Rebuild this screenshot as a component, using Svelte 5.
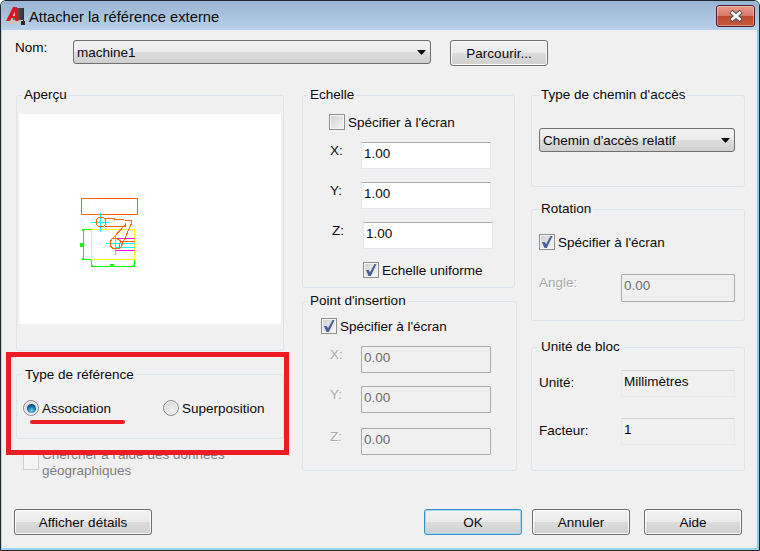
<script>
  const fieldsScale = [
    { label: 'X:', value: '1.00' },
    { label: 'Y:', value: '1.00' },
    { label: 'Z:', value: '1.00', shift: true }
  ];
  const fieldsInsert = [
    { label: 'X:', value: '0.00' },
    { label: 'Y:', value: '0.00' },
    { label: 'Z:', value: '0.00' }
  ];
</script>

{#snippet check(checked, disabled = false)}
  <span class="check" class:off={disabled}>
    {#if checked}
      <svg width="14" height="14" viewBox="0 0 14 14"><path d="M2 7 L4.8 7 L6 9.3 L10.5 1 L12.5 1 L6.8 13 L4.5 13 Z" fill="#4a5f97" /></svg>
    {/if}
  </span>
{/snippet}

{#snippet arrow()}
  <svg class="arrow" width="9" height="5" viewBox="0 0 9 5"><path d="M0 0H9L4.5 5Z" fill="#000" /></svg>
{/snippet}

<div class="window">
  <header class="titlebar">
    <svg class="appicon" width="20" height="20" viewBox="0 0 20 20">
      <defs>
        <linearGradient id="dk" x1="0" x2="1"><stop offset="0" stop-color="#6d6d6d" /><stop offset="1" stop-color="#2f2f2f" /></linearGradient>
      </defs>
      <rect x="7" y="2" width="11" height="13" fill="url(#dk)" />
      <rect x="0" y="14" width="17" height="4" fill="#c4c4c4" />
      <path d="M0 15 L7 1 H11 L12.5 15 H9.5 L9.2 12 H5.5 L4 15 Z" fill="#e0141c" />
      <path d="M6.7 10 L8.7 5.5 L9 10 Z" fill="#f0c8c8" />
      <rect x="15" y="15" width="4" height="4" fill="#2a2a2a" />
    </svg>
    <span class="title">Attacher la référence externe</span>
    <button class="close" aria-label="Fermer">
      <svg width="14" height="12" viewBox="0 0 14 12"><path d="M2 1.5 L12 10.5 M12 1.5 L2 10.5" stroke="#4a4a55" stroke-width="4.6" /><path d="M2.5 2 L11.5 10 M11.5 2 L2.5 10" stroke="#f4f4f6" stroke-width="3" /></svg>
    </button>
  </header>

  <div class="content">
    <div class="toprow">
      <span class="nom">Nom:</span>
      <div class="combo name">machine1 {@render arrow()}</div>
      <div class="btn browse">Parcourir...</div>
    </div>

    <div class="columns">
      <div class="col">
        <section class="group preview-g">
          <div class="legend high left">Aperçu</div>
          <div class="preview">
            <svg width="262" height="210" viewBox="19 114 262 210" shape-rendering="crispEdges" fill="none">
              <rect x="81.5" y="198.5" width="56" height="16" stroke="#ff6600" />
              <path d="M83.5 229.5V259.5M83 229.5H91M83 259.5H91M91.5 259V266.5H134.5V259" stroke="#00ff00" />
              <rect x="80" y="243" width="3" height="4" fill="#00ff00" />
              <rect x="110" y="264" width="4" height="3" fill="#00ff00" />
              <rect x="82" y="229" width="2" height="2" fill="#00ff00" />
              <rect x="82" y="258" width="2" height="2" fill="#00ff00" />
              <rect x="91" y="265" width="2" height="2" fill="#00ff00" />
              <rect x="133" y="265" width="2" height="2" fill="#00ff00" />
              <rect x="91.5" y="229.5" width="43" height="29.5" stroke="#ffff00" />
              <path d="M116 238.5H135M116 250.5H135" stroke="#ff00ff" />
              <path d="M106 243.5H135M116 247.5H135M115.5 235V255M91 222.5H110M100.5 213V232" stroke="#00ffff" />
              <g stroke="#ff6600">
                <path d="M96.5 219.5L98.5 217.5H103.5L105.5 219.5V224.5L103.5 226.5H98.5L96.5 224.5Z" />
                <path d="M105 218.5H114V219.5H124M105 226.5H125V222.5M125 221L127 220.5H131L131 224.5L120.5 248M125.5 224.5L113 238" />
                <path d="M112.5 238.5H116L120.5 241L119 248.5H113L110.5 246V241Z" />
                <path d="M120 241.5H135" />
              </g>
            </svg>
          </div>
        </section>

        <section class="group type-g">
          <div class="legend">Type de référence</div>
          <div class="radios">
            <label class="opt first"><span class="radio on"><i></i></span>Association</label>
            <label class="opt"><span class="radio"></span>Superposition</label>
          </div>
        </section>

        <div class="geo">
          {@render check(false, true)}
          <span>Chercher à l'aide des données<br />géographiques</span>
        </div>
      </div>

      <div class="col">
        <section class="group scale-g">
          <div class="legend high left">Echelle</div>
          <label class="chk scale-chk">{@render check(false)}Spécifier à l'écran</label>
          {#each fieldsScale as f}
            <div class="frow" class:shift={f.shift}>
              <span class="flabel">{f.label}</span>
              <div class="field">{f.value}</div>
            </div>
          {/each}
          <label class="chk uniform">{@render check(true)}Echelle uniforme</label>
        </section>

        <section class="group insert-g">
          <div class="legend high left">Point d'insertion</div>
          <label class="chk insert-chk">{@render check(true)}Spécifier à l'écran</label>
          {#each fieldsInsert as f, i}
            <div class="frow dis" class:last={i === 2}>
              <span class="flabel">{f.label}</span>
              <div class="field off">{f.value}</div>
            </div>
          {/each}
        </section>
      </div>

      <div class="col">
        <section class="group path-g">
          <div class="legend high right">Type de chemin d'accès</div>
          <div class="combo path">Chemin d'accès relatif {@render arrow()}</div>
        </section>

        <section class="group rot-g">
          <div class="legend high right">Rotation</div>
          <label class="chk rot-chk">{@render check(true)}Spécifier à l'écran</label>
          <div class="rrow dis">
            <span class="rlabel">Angle:</span>
            <div class="field off angle">0.00</div>
          </div>
        </section>

        <section class="group unit-g">
          <div class="legend high right">Unité de bloc</div>
          <div class="urow u1">
            <span class="ulabel">Unité:</span>
            <div class="field ro">Millimètres</div>
          </div>
          <div class="urow u2">
            <span class="ulabel">Facteur:</span>
            <div class="field ro">1</div>
          </div>
        </section>
      </div>
    </div>

    <footer class="footer">
      <div class="btn details">Afficher détails</div>
      <div class="actions">
        <div class="btn act default">OK</div>
        <div class="btn act cancel">Annuler</div>
        <div class="btn act help">Aide</div>
      </div>
    </footer>
  </div>

  <div class="redbox"></div>
  <div class="redline"></div>
</div>

<style>
  :global(body) {
    margin: 0;
    background: #fff;
  }
  .window {
    position: relative;
    width: 760px;
    height: 551px;
    box-sizing: border-box;
    display: flex;
    flex-direction: column;
    overflow: hidden;
    border: 1px solid #20262c;
    border-radius: 6px 6px 0 0;
    font-family: "Liberation Sans", Arial, sans-serif;
    font-size: 13.5px;
    line-height: 15px;
    color: #0a0a0a;
    background: #f0f0f0;
  }
  .titlebar {
    height: 29px;
    flex: none;
    display: flex;
    align-items: flex-start;
    background: linear-gradient(#99b4d1, #b9d1ea);
  }
  .appicon {
    margin: 5px 0 0 5px;
  }
  .title {
    margin: 8px 0 0 3px;
    font-size: 14.75px;
    line-height: 16px;
  }
  .close {
    margin: 4px 4px 0 auto;
    width: 39px;
    height: 22px;
    padding: 0;
    box-sizing: border-box;
    border: 1px solid #4c2030;
    border-radius: 3px;
    background: linear-gradient(#e79b88 0, #d97a68 48%, #bb4a2e 50%, #c3583e 100%);
    box-shadow: inset 0 0 0 1px rgba(255, 255, 255, 0.35);
    display: flex;
    align-items: center;
    justify-content: center;
  }
  .content {
    flex: 1;
    min-height: 0;
    box-sizing: border-box;
    border-left: 1px solid #a9d4ee;
    border-right: 2px solid #7fcbe8;
    border-bottom: 2px solid #9ad3ec;
    padding: 10px 12px 0 14px;
    display: flex;
    flex-direction: column;
  }
  .toprow {
    display: flex;
    align-items: flex-start;
    height: 25px;
    margin-left: -1px;
  }
  .nom {
    width: 58px;
  }
  .combo {
    position: relative;
    box-sizing: border-box;
    height: 24px;
    border: 1px solid #707070;
    border-radius: 3px;
    background: linear-gradient(#f2f2f2, #ebebeb 50%, #dcdcdc 51%, #cfcfcf);
    padding: 4px 0 0 3px;
  }
  .combo.name {
    width: 358px;
    margin-right: 19px;
  }
  .arrow {
    position: absolute;
    right: 4px;
    top: 9px;
  }
  .btn {
    box-sizing: border-box;
    height: 26px;
    border: 1px solid #707070;
    border-radius: 3px;
    background: linear-gradient(#f2f2f2, #ebebeb 50%, #dcdcdc 51%, #cfcfcf);
    box-shadow: inset 0 0 0 1px #fbfbfb;
    display: flex;
    align-items: center;
    justify-content: center;
  }
  .browse {
    width: 98px;
  }
  .columns {
    display: grid;
    grid-template-columns: 268px 233px 228px;
    margin-top: 30px;
    height: 414px;
  }
  .col {
    display: flex;
    flex-direction: column;
  }
  .col:nth-child(2) {
    margin-left: 18px;
  }
  .col:nth-child(3) {
    margin-left: 14px;
  }
  .group {
    box-sizing: border-box;
    border: 1px solid #dce3ea;
    border-radius: 3px;
    flex: none;
  }
  .legend {
    width: fit-content;
    margin: -8px 0 0 6px;
    padding: 0 2px;
    background: #f0f0f0;
  }
  .legend.high {
    margin-top: -9px;
    padding-bottom: 1px;
  }
  .legend.left {
    margin-left: 5px;
  }
  .legend.right {
    margin-left: 7px;
  }
  .preview-g {
    height: 256px;
  }
  .preview {
    margin: 11px 0 0 2px;
    width: 262px;
    height: 210px;
    background: #fff;
  }
  .preview svg {
    display: block;
  }
  .type-g {
    height: 65px;
    margin-top: 23px;
  }
  .radios {
    display: flex;
    padding: 18px 0 0 6px;
  }
  .opt {
    display: flex;
    align-items: center;
    gap: 3px;
    height: 16px;
  }
  .opt.first {
    width: 140px;
  }
  .radio {
    width: 16px;
    height: 16px;
    box-sizing: border-box;
    flex: none;
    border: 1px solid #8d8d8d;
    border-radius: 50%;
    background: radial-gradient(circle at 60% 65%, #f2f2f2, #cfcfcf);
    box-shadow: inset 0 0 0 1px #f4f4f4;
    display: flex;
    align-items: center;
    justify-content: center;
  }
  .radio i {
    width: 9px;
    height: 9px;
    border-radius: 50%;
    background: radial-gradient(circle at 50% 72%, #6fd8f5, #10699e 50%, #0a3a63);
  }
  .geo {
    display: flex;
    gap: 3px;
    margin: 8px 0 0 7px;
    color: #7f7f7f;
    line-height: 16px;
  }
  .check {
    width: 16px;
    height: 16px;
    box-sizing: border-box;
    flex: none;
    border: 1px solid #8e8f8f;
    background: linear-gradient(135deg, #cfd0d2, #f6f6f6);
    box-shadow: inset 0 0 0 1px #f6f6f6;
    display: flex;
    align-items: center;
    justify-content: center;
  }
  .check.off {
    border-color: #cfcfcf;
    background: #f4f4f4;
    margin-top: 7px;
  }
  .chk {
    display: flex;
    align-items: center;
    gap: 3px;
    height: 16px;
    width: fit-content;
  }
  .scale-g {
    width: 213px;
    height: 193px;
  }
  .scale-chk {
    margin: 11px 0 0 26px;
  }
  .uniform {
    margin: 13px 0 0 60px;
  }
  .frow {
    display: flex;
    height: 27px;
    margin: 13px 0 0 26px;
  }
  .scale-chk + .frow {
    margin-top: 12px;
  }
  .frow.shift {
    margin-left: 28px;
  }
  .flabel {
    box-sizing: border-box;
    width: 32px;
    padding: 1px 0 0 1px;
  }
  .field {
    box-sizing: border-box;
    width: 130px;
    height: 27px;
    padding: 3px 0 0 2px;
    background: #fff;
    border: 1px solid #e2e8ee;
    border-top-color: #abadb3;
    border-radius: 1px;
  }
  .field.off {
    background: #f0f0f0;
    border-color: #acacac;
    color: #6d6d6d;
  }
  .field.ro {
    width: 114px;
    background: #f0f0f0;
    border-color: #e6e9ec;
    border-top-color: #cfd2d6;
  }
  .dis .flabel,
  .rlabel {
    color: #a8a8a8;
    text-shadow: 1px 1px 0 #fff;
  }
  .insert-g {
    width: 215px;
    height: 170px;
    margin-top: 13px;
  }
  .insert-chk {
    margin: 9px 0 0 18px;
  }
  .insert-chk + .frow {
    margin-top: 12px;
  }
  .insert-g .frow.last {
    margin-top: 15px;
  }
  .path-g {
    width: 214px;
    height: 92px;
  }
  .combo.path {
    width: 196px;
    margin: 25px 0 0 7px;
  }
  .rot-g {
    width: 214px;
    height: 112px;
    margin-top: 22px;
  }
  .rot-chk {
    margin: 17px 0 0 7px;
  }
  .rrow {
    display: flex;
    margin: 24px 0 0 7px;
  }
  .rlabel {
    box-sizing: border-box;
    width: 82px;
    padding-top: 1px;
  }
  .field.angle {
    width: 114px;
    height: 28px;
  }
  .unit-g {
    width: 214px;
    height: 124px;
    margin-top: 26px;
  }
  .urow {
    display: flex;
    height: 27px;
    margin-left: 7px;
  }
  .u1 {
    margin-top: 15px;
  }
  .u2 {
    margin-top: 21px;
  }
  .ulabel {
    width: 82px;
    padding-top: 5px;
  }
  .footer {
    display: flex;
    justify-content: space-between;
    margin: 0 3px 0 -2px;
  }
  .details {
    width: 138px;
  }
  .actions {
    display: flex;
  }
  .act {
    width: 98px;
  }
  .cancel {
    margin-left: 10px;
  }
  .help {
    margin-left: 14px;
  }
  .default {
    border-color: #3c8fc4;
    box-shadow: inset 0 0 0 1px #9fdcf5;
  }
  .redbox {
    position: absolute;
    left: 5px;
    top: 351px;
    width: 283px;
    height: 103px;
    box-sizing: border-box;
    border: 5px solid #ed1c24;
  }
  .redline {
    position: absolute;
    left: 29px;
    top: 419px;
    width: 95px;
    height: 4px;
    border-radius: 2px;
    background: #ed1c24;
  }
</style>
